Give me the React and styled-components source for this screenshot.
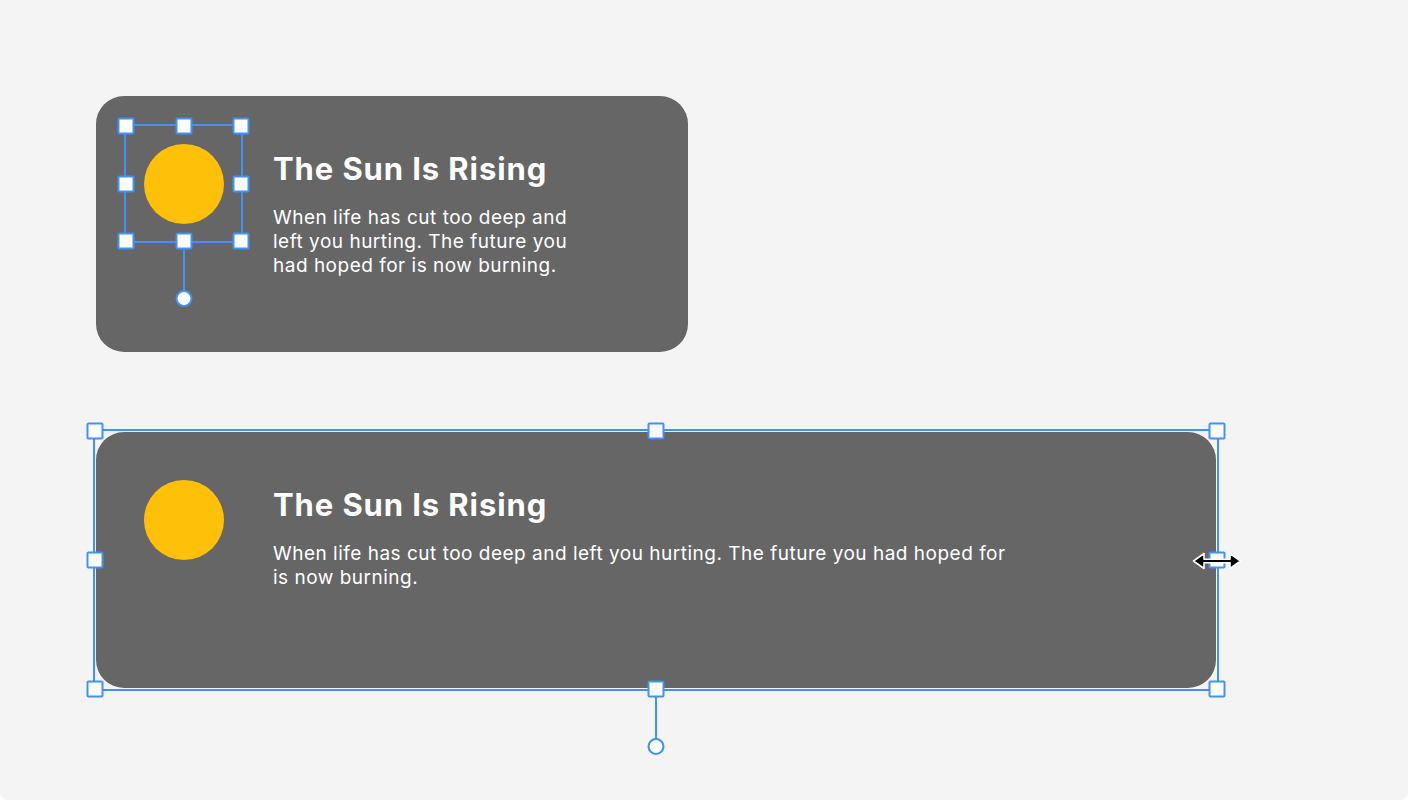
import React from 'react';
import styled, { createGlobalStyle } from 'styled-components';

const Global = createGlobalStyle`
  html, body { margin: 0; padding: 0; background: #ffffff; }
  body { font-family: Inter, "Noto Sans", "Liberation Sans", sans-serif; }
`;

const BLUE = '#4191f6';

const Page = styled.div`
  width: 1408px;
  height: 800px;
  box-sizing: border-box;
  background: #f4f4f4;
  border-radius: 0 0 8px 8px;
  padding: 96px 0 0 96px;
  display: flex;
  flex-direction: column;
  gap: 80px;
  overflow: hidden;
`;

const Frame = styled.div`
  position: relative;
  width: ${p => p.$width}px;
`;

const Card = styled.div`
  width: ${p => p.$width}px;
  height: 256px;
  box-sizing: border-box;
  background: #666666;
  border-radius: 28px;
  padding: 48px;
  display: flex;
  align-items: flex-start;
  gap: 49px;
`;

const SunWrap = styled.div`
  position: relative;
  width: 80px;
  height: 80px;
  flex: none;
`;

const Sun = styled.div`
  width: 80px;
  height: 80px;
  border-radius: 50%;
  background: #fec009;
`;

const Text = styled.div`
  padding-top: 7px;
  max-width: ${p => p.$max}px;
  color: #ffffff;
`;

const Title = styled.h2`
  margin: 0 0 19px;
  font-size: 31px;
  line-height: 36px;
  font-weight: 700;
  letter-spacing: 0.9px;
`;

const Body = styled.p`
  margin: 0;
  font-size: 19px;
  line-height: 24px;
  font-weight: 400;
  letter-spacing: 0.5px;
`;

const SelBox = styled.div`
  position: absolute;
  left: ${p => p.$l}px;
  top: ${p => p.$t}px;
  width: ${p => p.$w}px;
  height: ${p => p.$h}px;
  border: 2px solid ${BLUE};
  box-sizing: border-box;
  pointer-events: none;
`;

const Handle = styled.span`
  position: absolute;
  width: 17px;
  height: 17px;
  box-sizing: border-box;
  background: #fff;
  border: 2px solid ${BLUE};
  border-radius: 2px;
  left: ${p => p.$x}%;
  top: ${p => p.$y}%;
  transform: translate(-50%, -50%);
`;

const Stem = styled.span`
  position: absolute;
  left: 50%;
  top: 100%;
  width: 2px;
  height: 50px;
  margin-left: -1px;
  background: ${BLUE};
`;

const Knob = styled.span`
  position: absolute;
  left: 50%;
  top: calc(100% + 49px);
  width: 17px;
  height: 17px;
  box-sizing: border-box;
  border: 2px solid ${BLUE};
  border-radius: 50%;
  background: #fff;
  transform: translate(-50%, 0);
`;

const Cursor = styled.svg`
  position: absolute;
  right: -26px;
  top: 119px;
`;

const points = [
  [0, 0], [50, 0], [100, 0],
  [0, 50], [100, 50],
  [0, 100], [50, 100], [100, 100],
];

function Selection(props) {
  return (
    <SelBox {...props}>
      <Stem />
      <Knob />
      {points.map(([x, y]) => <Handle key={x + '-' + y} $x={x} $y={y} />)}
    </SelBox>
  );
}

const body = 'When life has cut too deep and left you hurting. The future you had hoped for is now burning.';

export default function App() {
  return (
    <>
      <Global />
      <Page>
        <Frame $width={592}>
          <Card $width={592}>
            <SunWrap>
              <Sun />
              <Selection $l={-20} $t={-20} $w={119} $h={119} />
            </SunWrap>
            <Text $max={305}>
              <Title>The Sun Is Rising</Title>
              <Body>{body}</Body>
            </Text>
          </Card>
        </Frame>
        <Frame $width={1120}>
          <Card $width={1120}>
            <SunWrap>
              <Sun />
            </SunWrap>
            <Text $max={745}>
              <Title>The Sun Is Rising</Title>
              <Body>{body}</Body>
            </Text>
          </Card>
          <Selection $l={-3} $t={-3} $w={1126} $h={262} />
          <Cursor width="50" height="20" viewBox="0 0 50 20">
            <path
              d="M1.5 10 L12 2.5 L12 8.3 L38 8.3 L38 2.5 L48.5 10 L38 17.5 L38 11.7 L12 11.7 L12 17.5 Z"
              fill="#000"
              stroke="#fff"
              strokeWidth="1.6"
              strokeLinejoin="round"
            />
          </Cursor>
        </Frame>
      </Page>
    </>
  );
}
